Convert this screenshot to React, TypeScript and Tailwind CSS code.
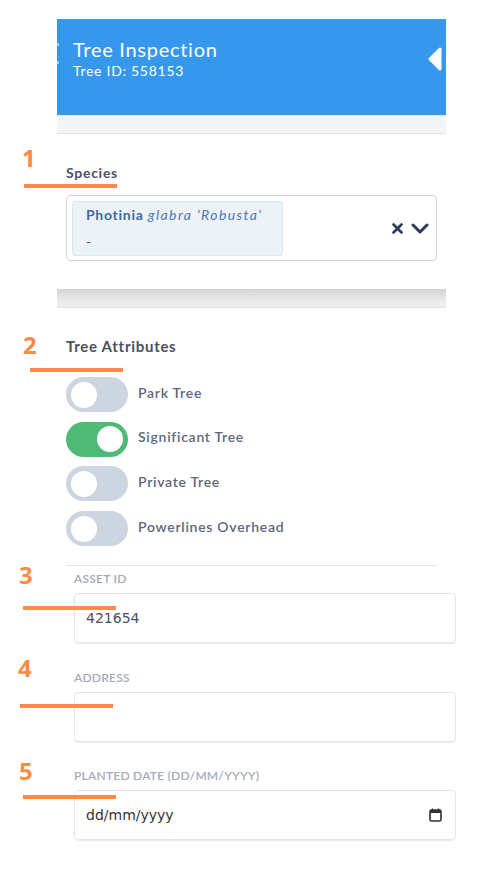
import React from "react";

function Toggle({ on, label }: { on?: boolean; label: string }) {
  return (
    <div className="flex items-center h-[35px]">
      <div
        className={
          "w-[62px] h-[35px] rounded-full flex items-center px-[5px] " +
          (on ? "bg-[#4fb977] justify-end" : "bg-[#cdd5e0] justify-start")
        }
      >
        <div className="w-[26px] h-[26px] rounded-full bg-white" />
      </div>
      <span className="ml-[10px] text-[14px] leading-[20px] font-semibold text-[#5d677b] -mt-[4px]">{label}</span>
    </div>
  );
}

function FieldLabel({ children }: { children: React.ReactNode }) {
  return (
    <div className="text-[12px] leading-[14px] font-semibold uppercase text-[#a3abb8] tracking-[0.02em]">
      {children}
    </div>
  );
}

function Annot({ n, nx, ny, lx, ly, lw }: { n: string; nx: number; ny: number; lx: number; ly: number; lw: number }) {
  return (
    <>
      <div
        className="absolute text-[24px] leading-[24px] font-bold text-[#fd8a47] tracking-normal"
        style={{ left: nx, top: ny, fontFamily: "'Open Sans', sans-serif" }}
      >
        {n}
      </div>
      <div className="absolute h-[4px] bg-[#fd8a47]" style={{ left: lx, top: ly, width: lw }} />
    </>
  );
}

export default function App() {
  return (
    <div
      className="relative w-[483px] h-[869px] bg-white overflow-hidden tracking-[0.045em]"
      style={{ fontFamily: "Lato, 'Noto Sans', sans-serif" }}
    >
      {/* Header */}
      <div className="relative ml-[57px] mt-[19px] w-[389px] h-[96px] bg-[#3598ed] pl-[16px] pt-[18px] text-white">
        <div className="text-[20px] leading-[24px]">Tree Inspection</div>
        <div className="text-[14px] leading-[18px] mt-[1px]">Tree ID: 558153</div>
        <div className="absolute left-0 top-[24px] w-[2px] h-[3px] rounded-full bg-white/60" />
        <div className="absolute left-0 top-[42px] w-[2px] h-[3px] rounded-full bg-white/60" />
        <svg className="absolute right-[4px] top-[28px]" width="14" height="24" viewBox="0 0 14 24">
          <path d="M12 2 L2 12 L12 22 Z" fill="white" stroke="white" strokeWidth="3" strokeLinejoin="round" />
        </svg>
      </div>
      <div className="ml-[57px] w-[389px] h-[19px] bg-[#f3f4f6] border-b border-[#e3e5e9]" style={{ boxShadow: "inset 0 2px 2px -1px rgba(0,0,0,0.06)" }} />

      {/* Species */}
      <div className="ml-[66px] w-[371px] mt-[29px]">
        <div className="text-[14px] leading-[20px] font-bold text-[#4a5261]">Species</div>
        <div className="mt-[12px] h-[66px] border border-[#cbd3e1] rounded-[4px] flex items-center pl-[5px] pr-[7px]">
          <div className="w-[211px] h-[55px] bg-[#edf2f7] border border-[#dce7f4] rounded-[3px] px-[13px] pt-[3px]">
            <div className="text-[14px] leading-[20px] text-[#3b6aa5] whitespace-nowrap">
              <span className="font-bold">Photinia</span> <span className="italic text-[#4a78b3] tracking-[0.1em]">glabra 'Robusta'</span>
            </div>
            <div className="text-[14px] leading-[20px] mt-[7px] text-[#4a5568]">-</div>
          </div>
          <div className="ml-auto flex items-center gap-[8px]">
            <svg width="11" height="11" viewBox="0 0 11 11">
              <path d="M1.5 1.5 L9.5 9.5 M9.5 1.5 L1.5 9.5" stroke="#2e3a59" strokeWidth="2.6" strokeLinecap="round" />
            </svg>
            <svg width="18" height="11" viewBox="0 0 18 11">
              <path d="M2 2 L9 9 L16 2" fill="none" stroke="#2e3a59" strokeWidth="3" strokeLinecap="round" strokeLinejoin="round" />
            </svg>
          </div>
        </div>
      </div>

      <div
        className="ml-[57px] w-[389px] h-[19px] mt-[28px] border-b border-[#e3e5e9]"
        style={{ background: "linear-gradient(to bottom, #d3d3d3, #e9e9e9 60%, #eeeeee)" }}
      />

      {/* Tree Attributes */}
      <div className="ml-[66px] w-[371px] mt-[28px]">
        <div className="text-[15px] leading-[20px] font-bold text-[#4a5261]">Tree Attributes</div>
        <div className="mt-[21px] flex flex-col gap-[9.7px]">
          <Toggle label="Park Tree" />
          <Toggle on label="Significant Tree" />
          <Toggle label="Private Tree" />
          <Toggle label="Powerlines Overhead" />
        </div>
        <div className="mt-[19px] border-t border-[#e2e5ea]" />
      </div>

      {/* Fields */}
      <div className="ml-[74px] w-[382px]">
        <div className="mt-[6px]">
          <FieldLabel>Asset ID</FieldLabel>
          <div
            className="mt-[7px] h-[50px] border border-[#e2e6ec] rounded-[4px] flex items-center px-[11px] text-[14px] text-[#4a5060] tracking-normal"
            style={{ fontFamily: "'DejaVu Sans', sans-serif", boxShadow: "0 1px 1px rgba(0,0,0,0.08)" }}
          >
            421654
          </div>
        </div>
        <div className="mt-[28px]">
          <FieldLabel>Address</FieldLabel>
          <div
            className="mt-[7px] h-[50px] border border-[#e2e6ec] rounded-[4px]"
            style={{ boxShadow: "0 1px 1px rgba(0,0,0,0.08)" }}
          />
        </div>
        <div className="mt-[27px]">
          <FieldLabel>Planted Date (DD/MM/YYYY)</FieldLabel>
          <div
            className="mt-[7px] h-[50px] border border-[#e2e6ec] rounded-[4px] flex items-center pl-[11px] pr-[13px] text-[14px] text-[#333] tracking-normal"
            style={{ fontFamily: "'DejaVu Sans', sans-serif", boxShadow: "0 1px 1px rgba(0,0,0,0.08)" }}
          >
            <span>dd/mm/yyyy</span>
            <svg className="ml-auto" width="13" height="14" viewBox="0 0 13 14">
              <rect x="1" y="2" width="11" height="11" rx="1.5" fill="none" stroke="#333" strokeWidth="1.6" />
              <rect x="1" y="2" width="11" height="3" fill="#333" />
              <path d="M3.5 0.5 V3 M9.5 0.5 V3" stroke="#333" strokeWidth="1.4" />
            </svg>
          </div>
        </div>
      </div>

      {/* Annotations */}
      <Annot n="1" nx={22} ny={146} lx={24} ly={184} lw={93} />
      <Annot n="2" nx={23} ny={333} lx={30} ly={368} lw={93} />
      <Annot n="3" nx={19} ny={563} lx={23} ly={606} lw={93} />
      <Annot n="4" nx={18} ny={656} lx={20} ly={704} lw={93} />
      <Annot n="5" nx={19} ny={759} lx={23} ly={795} lw={93} />
    </div>
  );
}
